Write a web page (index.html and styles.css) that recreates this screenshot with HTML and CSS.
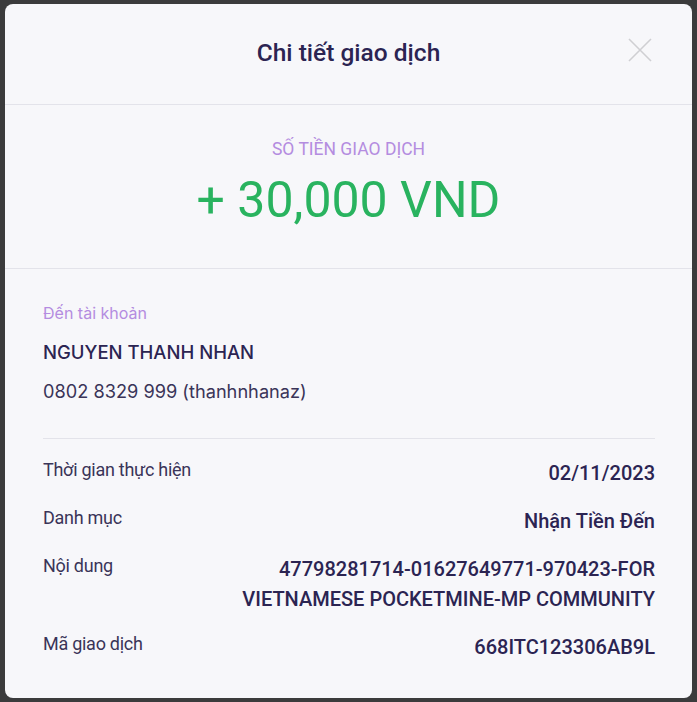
FILE: index.html
```html
<!DOCTYPE html>
<html lang="vi">
<head>
<meta charset="utf-8">
<link rel="stylesheet" href="styles.css">
</head>
<body>
<div class="overlay">
  <div class="modal">
    <div class="modal-header">
      <h1 class="title">Chi tiết giao dịch</h1>
      <button class="close" aria-label="Đóng">
        <svg width="24" height="24" viewBox="0 0 24 24"><path d="M1 1 L23 23 M23 1 L1 23" stroke="#cfcfd3" stroke-width="1.6" fill="none"/></svg>
      </button>
    </div>
    <div class="amount-box">
      <div class="amount-label">SỐ TIỀN GIAO DỊCH</div>
      <div class="amount">+ 30,000 VND</div>
    </div>
    <div class="details">
      <div class="account">
        <div class="acc-label">Đến tài khoản</div>
        <div class="acc-name">NGUYEN THANH NHAN</div>
        <div class="acc-number">0802 8329 999 (thanhnhanaz)</div>
      </div>
      <div class="rows">
        <div class="row"><span class="k">Thời gian thực hiện</span><span class="v">02/11/2023</span></div>
        <div class="row"><span class="k">Danh mục</span><span class="v">Nhận Tiền Đến</span></div>
        <div class="row"><span class="k">Nội dung</span><span class="v">47798281714-01627649771-970423-FOR VIETNAMESE POCKETMINE-MP COMMUNITY</span></div>
        <div class="row"><span class="k">Mã giao dịch</span><span class="v">668ITC123306AB9L</span></div>
      </div>
    </div>
  </div>
</div>
</body>
</html>
```

FILE: styles.css
```css
* { box-sizing: border-box; }
html, body { margin: 0; padding: 0; }
body {
  background: #3b3b3c;
  font-family: Roboto, "Noto Sans", sans-serif;
  width: 697px;
  height: 702px;
  overflow: hidden;
}
.overlay {
  padding: 4px 5px 4px 5px;
  height: 702px;
}
.modal {
  background: #f7f7fa;
  border-radius: 8px;
  height: 694px;
  display: flex;
  flex-direction: column;
}
.modal-header {
  height: 101px;
  border-bottom: 1px solid #e3e3ea;
  display: flex;
  align-items: center;
  justify-content: center;
  position: relative;
}
.title {
  margin: 0;
  font-size: 24.5px;
  font-weight: 500;
  color: #2b2452;
  line-height: 28px;
  margin-top: -2px;
}
.close {
  position: absolute;
  right: 40px;
  top: 34px;
  background: none;
  border: 0;
  padding: 0;
  width: 24px;
  height: 24px;
  display: flex;
}
.amount-box {
  height: 164px;
  border-bottom: 1px solid #e3e3ea;
  display: flex;
  flex-direction: column;
  align-items: center;
  padding-top: 34px;
}
.amount-label {
  font-size: 17.5px;
  color: #b48ce0;
  line-height: 20px;
}
.amount {
  margin-top: 9px;
  font-size: 50px;
  line-height: 64px;
  color: #29b35f;
  font-weight: 400;
}
.details {
  padding: 34px 37px 0 38px;
}
.account {
  border-bottom: 1px solid #e3e3ea;
  padding-bottom: 37px;
}
.acc-label {
  font-family: Inter, "Noto Sans", sans-serif;
  font-size: 16px;
  color: #b48ce0;
  line-height: 20px;
}
.acc-name {
  font-family: Inter, "Noto Sans", sans-serif;
  font-size: 18.5px;
  font-weight: 500;
  color: #2b2452;
  margin-top: 19px;
  line-height: 20px;
}
.acc-number {
  font-family: Inter, "Noto Sans", sans-serif;
  font-size: 18.2px;
  color: #3a3458;
  margin-top: 19px;
  line-height: 20px;
}
.rows {
  padding-top: 19px;
  display: flex;
  flex-direction: column;
  gap: 18px;
}
.row {
  display: flex;
  justify-content: space-between;
  align-items: flex-start;
  gap: 40px;
}
.k {
  font-size: 18px;
  letter-spacing: -0.27px;
  color: #3a3458;
  line-height: 24px;
  white-space: nowrap;
}
.v {
  font-size: 20px;
  font-weight: 500;
  color: #2b2452;
  text-align: right;
  line-height: 30px;
  max-width: 430px;
}
```
